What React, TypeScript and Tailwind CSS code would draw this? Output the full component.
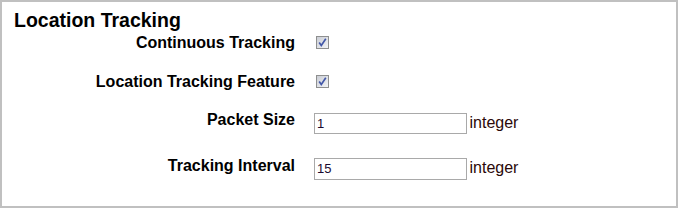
import React from "react";

function Check() {
  return (
    <svg width="13" height="13" viewBox="0 0 13 13" className="block">
      <defs>
        <linearGradient id="cbg" x1="0" y1="0" x2="1" y2="1">
          <stop offset="0" stopColor="#c9ccd3" />
          <stop offset="1" stopColor="#f4f5f8" />
        </linearGradient>
      </defs>
      <rect x="0.5" y="0.5" width="12" height="12" fill="url(#cbg)" stroke="#8e8f8f" />
      <path d="M3.2 6.4 L5.3 9.4 L9.8 2.8" fill="none" stroke="#4257a8" strokeWidth="1.7" strokeLinejoin="miter" />
    </svg>
  );
}

export default function App() {
  return (
    <div
      className="w-[678px] h-[208px] border-2 border-[#c0c0c0] bg-white text-black"
      style={{ fontFamily: '"Liberation Sans", Arial, sans-serif' }}
    >
      <div className="pt-[7px]">
        <div className="pl-[12px] h-[22px] leading-[22px] text-[19.5px] font-bold">Location Tracking</div>

        <div className="flex items-center h-[23px]">
          <div className="w-[293px] text-right text-[16px] leading-[18px] font-bold">Continuous Tracking</div>
          <div className="ml-[21px]">
            <Check />
          </div>
        </div>

        <div className="flex items-center h-[23px] mt-[16px]">
          <div className="w-[293px] text-right text-[16px] leading-[18px] font-bold">Location Tracking Feature</div>
          <div className="ml-[21px]">
            <Check />
          </div>
        </div>

        <div className="flex items-start mt-[18px]">
          <div className="w-[293px] text-right text-[16px] leading-[18px] font-bold">Packet Size</div>
          <div className="ml-[19px] mt-[2px] w-[153px] h-[21px] border border-[#a9a9a9] pl-[2px] flex items-center text-[13px] text-[#1a0a30]">
            1
          </div>
          <div className="ml-[2.5px] mt-[3px] text-[16px] leading-[18px] text-[#2a0808]">integer</div>
        </div>

        <div className="flex items-start mt-[23px]">
          <div className="w-[293px] text-right text-[16px] leading-[18px] font-bold">Tracking Interval</div>
          <div className="ml-[19px] mt-[1px] w-[153px] h-[22px] border border-[#a9a9a9] pl-[2px] flex items-center text-[13px] text-[#1a0a30]">
            15
          </div>
          <div className="ml-[2.5px] mt-[2px] text-[16px] leading-[18px] text-[#2a0808]">integer</div>
        </div>
      </div>
    </div>
  );
}
